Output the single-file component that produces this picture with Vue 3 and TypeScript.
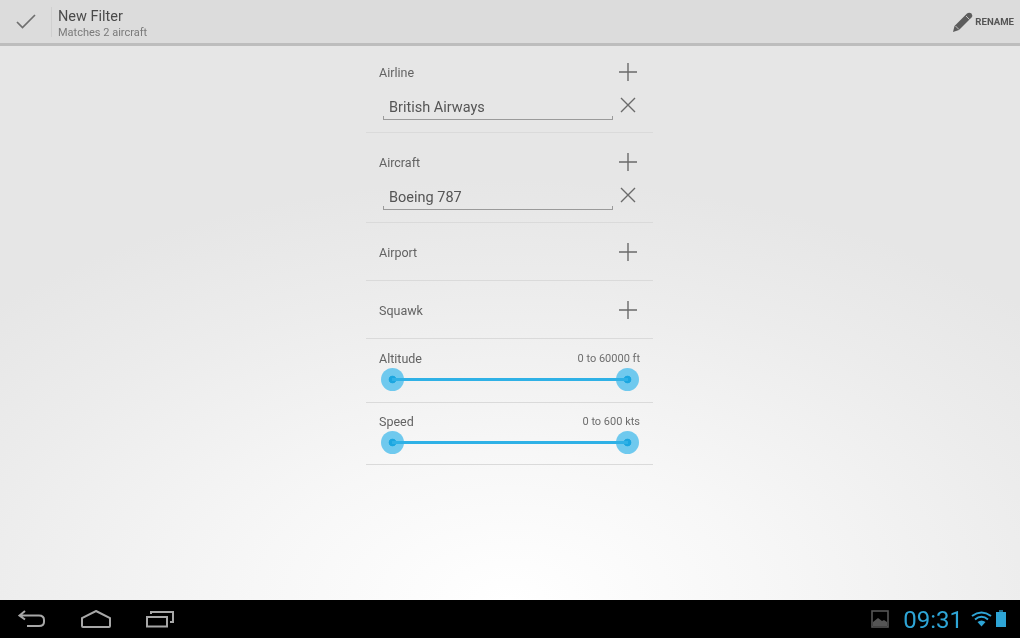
<script setup lang="ts">
interface FilterRow { label: string; value?: string; first?: boolean }
interface SliderRow { label: string; range: string }
const filters: FilterRow[] = [
  { label: 'Airline', value: 'British Airways', first: true },
  { label: 'Aircraft', value: 'Boeing 787' },
  { label: 'Airport' },
  { label: 'Squawk' },
]
const sliders: SliderRow[] = [
  { label: 'Altitude', range: '0 to 60000 ft' },
  { label: 'Speed', range: '0 to 600 kts' },
]
</script>

<template>
  <div class="screen">
    <header class="bar">
      <div class="done">
        <svg width="20" height="15" viewBox="0 0 20 15" fill="none" stroke="#6f6f6f" stroke-width="1.7">
          <path d="M1 8 L6.5 13.5 L19 1" />
        </svg>
      </div>
      <div class="titles">
        <div class="title">New Filter</div>
        <div class="subtitle">Matches 2 aircraft</div>
      </div>
      <div class="rename">
        <svg width="22" height="22" viewBox="0 0 22 22">
          <path d="M1 21 L2.5 15 L15 2.5 Q17 0.8 19.5 2.5 Q21 4.5 19.5 6.5 L7 19 Z" fill="#5c5c5c" />
          <path d="M14 5 L17.5 8.5" stroke="#dcdcdc" stroke-width="0.8" />
          <path d="M3.5 15 L7 18.5" stroke="#dcdcdc" stroke-width="0.8" />
        </svg>
        <span>RENAME</span>
      </div>
    </header>

    <main class="content">
      <section class="column">
        <div v-for="row in filters" :key="row.label" class="row" :class="{ first: row.first }">
          <div class="head">
            <span class="label">{{ row.label }}</span>
            <svg class="icon" width="20" height="20" viewBox="0 0 20 20" stroke="#6a6a6a" stroke-width="1.4">
              <path d="M10 1 V19 M1 10 H19" />
            </svg>
          </div>
          <div v-if="row.value" class="field">
            <div class="input">
              <span>{{ row.value }}</span>
            </div>
            <svg class="icon" width="20" height="20" viewBox="0 0 20 20" stroke="#6a6a6a" stroke-width="1.4">
              <path d="M3 3 L17 17 M17 3 L3 17" />
            </svg>
          </div>
        </div>
        <div v-for="s in sliders" :key="s.label" class="row slider-row">
          <div class="slider-head">
            <span class="label">{{ s.label }}</span>
            <span class="range">{{ s.range }}</span>
          </div>
          <div class="slider">
            <span class="thumb"></span>
            <span class="track"></span>
            <span class="thumb"></span>
          </div>
        </div>
      </section>
    </main>

    <footer class="nav">
      <div class="nav-buttons">
        <svg width="28" height="18" viewBox="0 0 28 18" fill="none" stroke="#a8a8a8" stroke-width="2">
          <path d="M7 1 L1.5 5.5 L7 9.5 M1.5 5.5 H21 Q26 5.5 26 10 V12 Q26 16 21 16 H9" />
        </svg>
        <svg width="32" height="18" viewBox="0 0 32 18" fill="none" stroke="#a8a8a8" stroke-width="2">
          <path d="M16 1 L30 8 V16 Q30 17 29 17 H3 Q2 17 2 16 V8 Z" />
        </svg>
        <svg width="30" height="18" viewBox="0 0 30 18" fill="none" stroke="#a8a8a8" stroke-width="2">
          <path d="M2 7 H22 V16.5 H2 Z" />
          <path d="M6 4 V2 H28 V12 H25" />
        </svg>
      </div>
      <div class="status">
        <svg width="18" height="18" viewBox="0 0 18 18">
          <rect x="1" y="1" width="16" height="16" fill="none" stroke="#555" stroke-width="1.6" />
          <path d="M2 16 V12 L7 8 L11 11 L13 10 L16 12 V16 Z" fill="#555" />
        </svg>
        <span class="clock">09:31</span>
        <svg width="21" height="16" viewBox="0 0 21 16" fill="none" stroke="#2ea5d6" stroke-width="2">
          <path d="M1 5 Q10.5 -2 20 5" />
          <path d="M4 8.5 Q10.5 3 17 8.5" />
          <path d="M10.5 15.5 L6.5 11 Q10.5 8 14.5 11 Z" fill="#2ea5d6" stroke="none" />
        </svg>
        <svg class="battery" width="12" height="18" viewBox="0 0 12 18">
          <rect x="4" y="0" width="4" height="2" fill="#1f6d8c" />
          <rect x="1" y="2" width="10" height="15" fill="#2ea5d6" />
        </svg>
      </div>
    </footer>
  </div>
</template>

<style scoped>
.screen {
  width: 1020px;
  height: 638px;
  display: flex;
  flex-direction: column;
  overflow: hidden;
  font-family: Roboto, "Liberation Sans", sans-serif;
  background: #000;
}
.bar {
  height: 43px;
  flex: none;
  display: flex;
  align-items: center;
  background: #dcdcdc;
  border-bottom: 3px solid #bdbdbd;
  filter: blur(0.7px);
}
.done {
  width: 52px;
  height: 30px;
  flex: none;
  display: flex;
  align-items: center;
  padding-left: 16px;
  box-sizing: border-box;
  border-right: 1px solid #cfcfcf;
}
.titles {
  margin-left: 6px;
  padding-top: 6px;
  flex: 1;
}
.title {
  font-size: 14.5px;
  line-height: 16px;
  color: #4a4a4a;
}
.subtitle {
  font-size: 11px;
  line-height: 15px;
  color: #7a7a7a;
}
.rename {
  display: flex;
  align-items: center;
  gap: 1px;
  margin-right: 6px;
  font-size: 9.6px;
  font-weight: 700;
  color: #555;
}
.content {
  flex: 1;
  display: flex;
  justify-content: center;
  background: radial-gradient(ellipse 720px 420px at 50% 100%, #ffffff 0%, #f7f7f7 35%, #ececec 75%, #e6e6e6 100%), #e6e6e6;
  filter: blur(0.7px);
}
.column {
  width: 287px;
  margin-right: 1px;
}
.row {
  box-sizing: border-box;
  height: 58px;
  padding: 0 13px;
  border-bottom: 1px solid #dadada;
}
.row:nth-child(1) {
  height: 87px;
}
.row:nth-child(2) {
  height: 90px;
}
.head {
  height: 58px;
  display: flex;
  align-items: center;
  justify-content: space-between;
}
.first .head {
  height: 52px;
}
.label {
  font-size: 12.5px;
  color: #636363;
}
.icon {
  flex: none;
  margin-right: 2px;
}
.field {
  display: flex;
  align-items: flex-start;
  justify-content: space-between;
  margin-top: -4px;
}
.first .field {
  margin-top: -1px;
}
.input {
  width: 230px;
  height: 23px;
  margin-left: 4px;
  box-sizing: border-box;
  padding: 1px 0 0 6px;
  position: relative;
  font-size: 14.5px;
  line-height: 19px;
  color: #555;
  border-bottom: 1px solid #9a9a9a;
}
.input::before,
.input::after {
  content: "";
  position: absolute;
  bottom: 0;
  width: 1px;
  height: 3px;
  background: #9a9a9a;
}
.input::before {
  left: 0;
}
.input::after {
  right: 0;
}
.field .icon {
  margin-top: -2px;
}
.slider-row {
  height: 64px;
  padding: 0 13px;
}
.slider-row:last-child {
  height: 62px;
}
.slider-head {
  display: flex;
  align-items: center;
  justify-content: space-between;
  height: 14px;
  padding-top: 12px;
}
.slider-row:last-child .slider-head {
  padding-top: 11px;
}
.range {
  font-size: 11px;
  color: #6d6d6d;
}
.slider {
  display: flex;
  align-items: center;
  margin-top: 2px;
  height: 24px;
}
.track {
  flex: 1;
  position: relative;
  height: 3px;
  margin: 0 -12px;
  background: #2fb1e6;
}
.thumb {
  width: 23px;
  height: 23px;
  flex: none;
  border-radius: 50%;
  background: radial-gradient(circle, #1ba6e0 0 3.5px, #6fc9ee 4.2px);
}
.slider .thumb:first-child {
  margin-left: 2px;
}
.slider .thumb:last-child {
  margin-right: 1px;
}
.nav {
  height: 38px;
  flex: none;
  display: flex;
  align-items: center;
  justify-content: space-between;
  background: #000;
  filter: blur(0.6px);
}
.nav-buttons {
  display: flex;
  align-items: center;
  gap: 33.5px;
  margin-left: 18px;
}
.status {
  display: flex;
  align-items: center;
  margin-right: 13px;
}
.clock {
  font-size: 24px;
  font-weight: 400;
  color: #2ea5d6;
  margin: 2px 8px 0 14px;
}
.battery {
  margin-left: 3px;
}
</style>
